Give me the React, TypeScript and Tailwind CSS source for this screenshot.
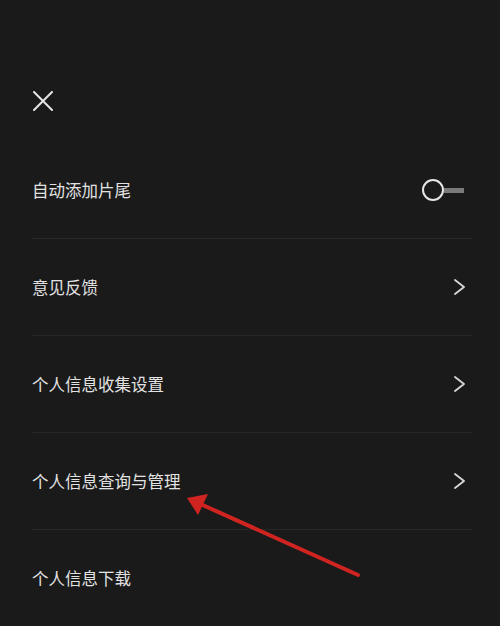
const rows = [
  { label: '自动添加片尾', kind: 'toggle' },
  { label: '意见反馈', kind: 'chevron' },
  { label: '个人信息收集设置', kind: 'chevron' },
  { label: '个人信息查询与管理', kind: 'chevron' },
  { label: '个人信息下载', kind: 'none' },
];

export default function App() {
  return (
    <div
      className="relative h-[626px] w-[500px] overflow-hidden bg-[#1a1a1a] text-[#e2e2e2]"
      style={{ fontFamily: '"Noto Sans CJK SC", "Noto Sans", sans-serif' }}
    >
      <div className="pl-[33px] pt-[91px] pb-[31px]">
        <svg width="20" height="20" viewBox="0 0 20 20" className="block">
          <path d="M1 1 L19 19 M19 1 L1 19" stroke="#e6e6e6" strokeWidth="2" strokeLinecap="round" />
        </svg>
      </div>

      <div className="pl-[32px] pr-[28px]">
        {rows.map((row, i) => (
          <div
            key={i}
            className={`flex h-[97px] items-center justify-between ${i < rows.length - 1 ? 'border-b border-[#272727]' : ''}`}
          >
            <span className="text-[16.5px] leading-none">{row.label}</span>
            {row.kind === 'toggle' && (
              <div className="mr-[8px] flex items-center">
                <div className="h-[22px] w-[22px] rounded-full border-2 border-[#e6e6e6]" />
                <div className="h-[5px] w-[20px] bg-[#7a7a7a]" />
              </div>
            )}
            {row.kind === 'chevron' && (
              <svg width="12" height="16" viewBox="0 0 12 16" className="mr-[6px] block">
                <path d="M1 1 L10 8 L1 15" fill="none" stroke="#d8d8d8" strokeWidth="1.8" strokeLinecap="round" strokeLinejoin="round" />
              </svg>
            )}
          </div>
        ))}
      </div>

      {/* red annotation arrow */}
      <svg className="pointer-events-none absolute inset-0" width="500" height="626">
        <line x1="358" y1="575" x2="196" y2="502" stroke="#cf2420" strokeWidth="4" strokeLinecap="round" />
        <polygon points="187,498 208,494 198,515" fill="#cf2420" />
      </svg>
    </div>
  );
}
